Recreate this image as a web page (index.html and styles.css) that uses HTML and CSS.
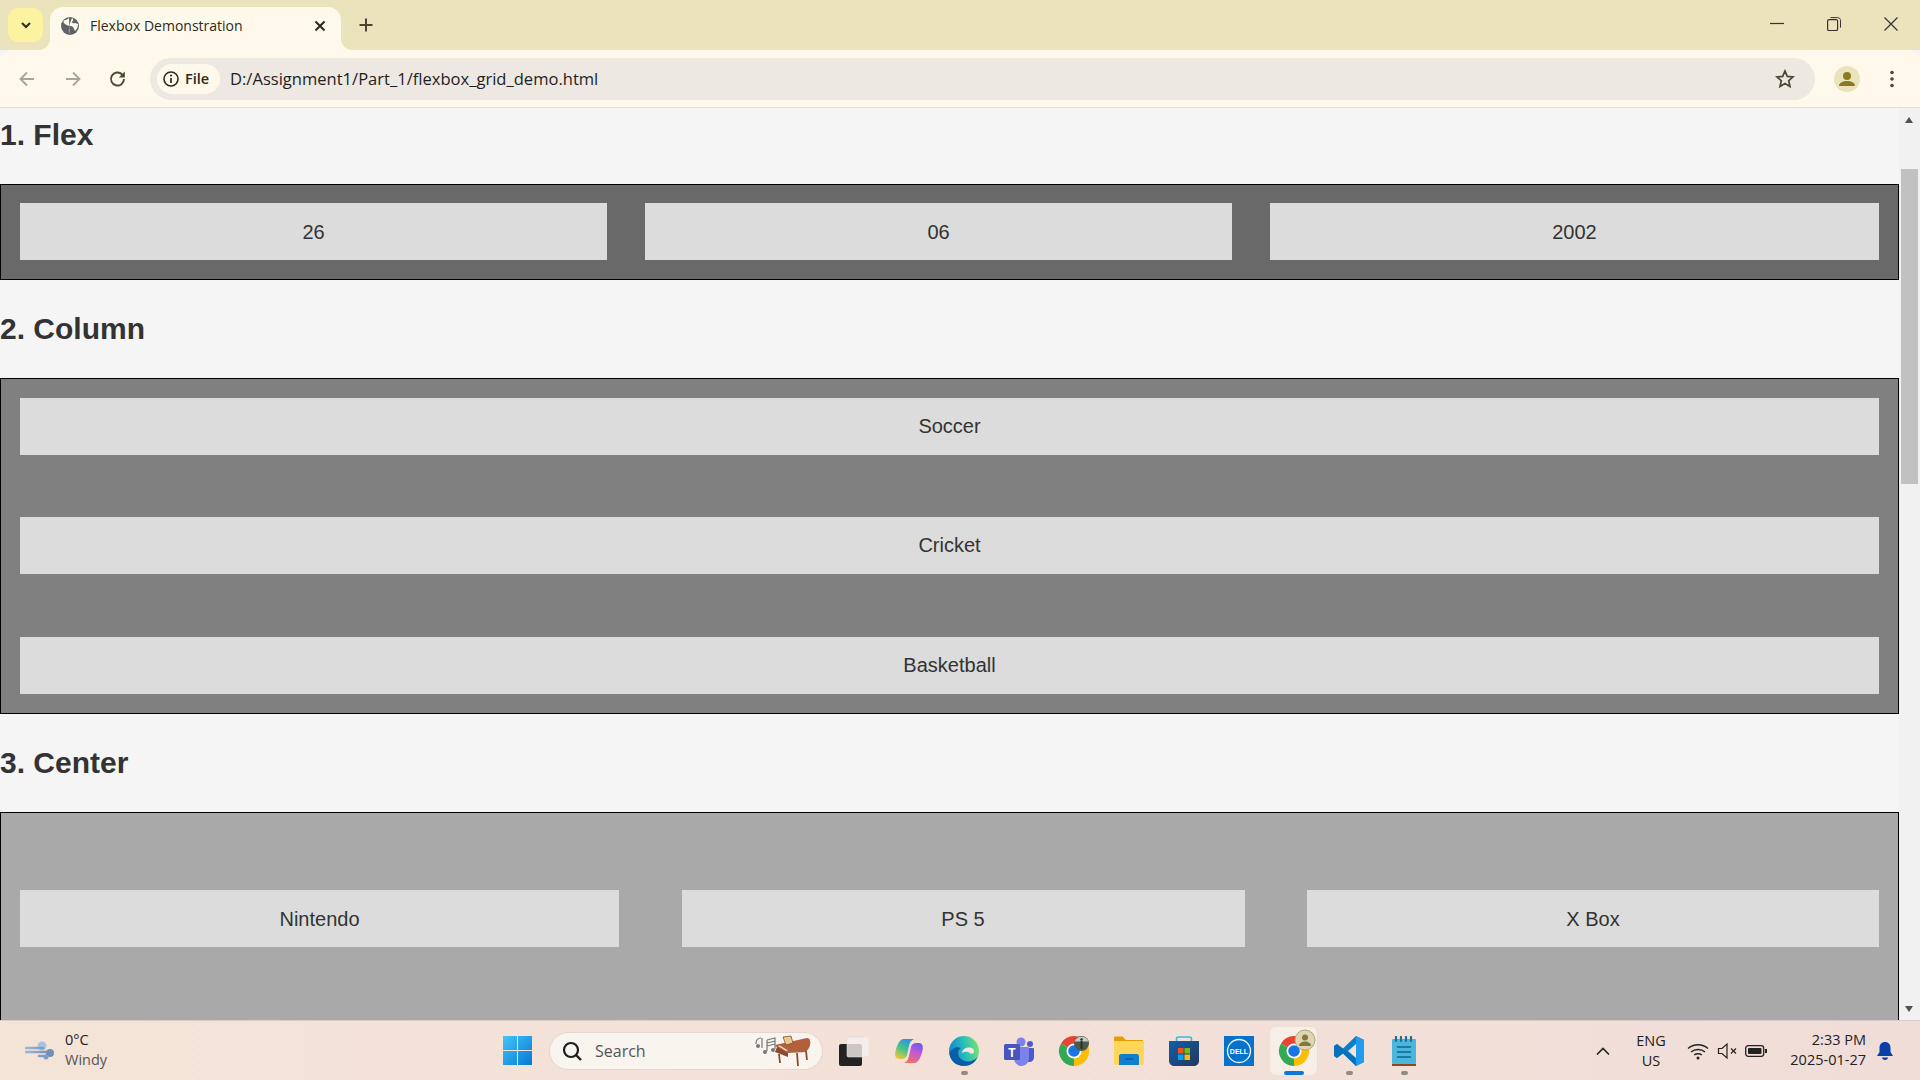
FILE: index.html
```html
<!DOCTYPE html>
<html lang="en">
<head>
    <meta charset="UTF-8">
    <title>Flexbox Demonstration</title>
    <link rel="stylesheet" href="styles.css">
</head>
<body>

<div class="tab-strip">
    <div class="tab-list">
        <svg width="14" height="14" viewBox="0 0 14 14"><path d="M3 5l4 4 4-4" fill="none" stroke="#2b2a1c" stroke-width="2"/></svg>
    </div>
    <div class="tab">
        <svg class="tab-globe" width="20" height="20" viewBox="0 0 20 20">
            <circle cx="10" cy="10" r="9" fill="#5f6368"/>
            <path d="M9 1.500C8 4 5 3.500 3.500 5 3 7 6 9 8 9.500c2 .5 2 2 1 3.500-.5 1.500 0 3 .5 5M12 2c2 1 1 3 0 4s2 1.500 3 1l3 1c0 3-1 5-3 7-1-1-1-3-2-4s-2-1-3-1c-1-1 0-2 0-3" fill="#fff9eb"/>
        </svg>
        <span class="tab-title">Flexbox Demonstration</span>
        <svg class="tab-close" width="14" height="14" viewBox="0 0 14 14"><path d="M2.500 2.500l9 9M11.500 2.500l-9 9" stroke="#2b2a1c" stroke-width="2"/></svg>
    </div>
    <svg class="new-tab" width="16" height="16" viewBox="0 0 16 16"><path d="M8 1.500v13M1.500 8h13" stroke="#4a4630" stroke-width="2"/></svg>
    <div class="window-controls">
        <svg width="14" height="14" viewBox="0 0 14 14"><path d="M0 6.500h14" stroke="#333" stroke-width="1.200"/></svg>
        <svg width="14" height="14" viewBox="0 0 14 14"><rect x=".6" y="2.600" width="10" height="11" rx="1.500" fill="none" stroke="#333" stroke-width="1.200"/><path d="M3.500.6h7c1.800 0 3 1 3 3v7" fill="none" stroke="#333" stroke-width="1"/></svg>
        <svg width="14" height="14" viewBox="0 0 14 14"><path d="M.5.500l13 13M13.500.5l-13 13" stroke="#333" stroke-width="1.200"/></svg>
    </div>
</div>

<div class="toolbar">
    <div class="nav-buttons">
        <svg width="20" height="20" viewBox="0 0 20 20"><path d="M17 10H4M10 3.500L3.500 10l6.500 6.500" fill="none" stroke="#a8a498" stroke-width="1.800"/></svg>
        <svg width="20" height="20" viewBox="0 0 20 20"><path d="M3 10h13M10 3.500l6.500 6.500-6.500 6.500" fill="none" stroke="#a8a498" stroke-width="1.800"/></svg>
        <svg width="20" height="20" viewBox="0 0 20 20"><path d="M16 10a6.500 6.500 0 1 1-2-4.700L16 7" fill="none" stroke="#4d4935" stroke-width="1.900"/><path d="M16.800 2.500v6h-6z" fill="#4d4935"/></svg>
    </div>
    <div class="address-bar">
        <div class="site-chip">
            <svg width="18" height="18" viewBox="0 0 18 18"><circle cx="9" cy="9" r="7" fill="none" stroke="#2b2a1c" stroke-width="1.600"/><path d="M9 8v5" stroke="#2b2a1c" stroke-width="1.700"/><circle cx="9" cy="5.500" r="1.100" fill="#2b2a1c"/></svg>
            <span>File</span>
        </div>
        <span class="url">D:/Assignment1/Part_1/flexbox_grid_demo.html</span>
        <svg class="star" width="20" height="20" viewBox="0 0 20 20"><path d="M10 2l2.300 5.400 5.700.5-4.300 3.800 1.300 5.700-5-3-5 3 1.300-5.700L2 7.900l5.700-.5z" fill="none" stroke="#4a4630" stroke-width="1.700"/></svg>
    </div>
    <svg class="profile" width="26" height="26" viewBox="0 0 26 26"><circle cx="13" cy="13" r="13" fill="#ebe3bc"/><circle cx="13" cy="10" r="4" fill="#8a7a24"/><path d="M5 20c0-3.500 4-5 8-5s8 1.500 8 5z" fill="#8a7a24"/></svg>
    <svg class="menu" width="20" height="20" viewBox="0 0 20 20"><circle cx="10" cy="3.500" r="1.800" fill="#4a4630"/><circle cx="10" cy="10" r="1.800" fill="#4a4630"/><circle cx="10" cy="16.500" r="1.800" fill="#4a4630"/></svg>
</div>

<div class="viewport">
    <div class="page">
        <h2>1. Flex</h2>
        <div class="flex-box">
            <div class="item">26</div>
            <div class="item">06</div>
            <div class="item">2002</div>
        </div>

        <h2>2. Column</h2>
        <div class="column-box">
            <div class="item">Soccer</div>
            <div class="item">Cricket</div>
            <div class="item">Basketball</div>
        </div>

        <h2>3. Center</h2>
        <div class="center-box">
            <div class="item">Nintendo</div>
            <div class="item">PS 5</div>
            <div class="item">X Box</div>
        </div>
    </div>
    <div class="scrollbar">
        <div class="arrow-up"></div>
        <div class="thumb"></div>
        <div class="arrow-down"></div>
    </div>
</div>

<div class="taskbar">
    <div class="weather">
        <svg width="30" height="22" viewBox="0 0 30 22">
            <defs><linearGradient id="wind" x1="0" y1="0" x2="1" y2="0"><stop offset="0" stop-color="#9db8d8"/><stop offset="1" stop-color="#6f8fb8"/></linearGradient></defs>
            <circle cx="17" cy="6" r="4.500" fill="#a9c2de"/>
            <circle cx="25" cy="13" r="4" fill="#6f8fb8"/>
            <path d="M1 8h17M1 12h23M14 16h8" stroke="url(#wind)" stroke-width="2.600" stroke-linecap="round"/>
            <circle cx="21" cy="17" r="2.500" fill="#7f9dc4"/>
        </svg>
        <div class="weather-text">
            <span>0°C</span>
            <span class="weather-sub">Windy</span>
        </div>
    </div>

    <svg class="start" width="29" height="29" viewBox="0 0 29 29">
        <defs><linearGradient id="win" x1="0" y1="0" x2="1" y2="1"><stop offset="0" stop-color="#45c5f8"/><stop offset="1" stop-color="#0378d6"/></linearGradient></defs>
        <path d="M0 0h14v14H0zM15 0h14v14H15zM0 15h14v14H0zM15 15h14v14H15z" fill="url(#win)"/>
    </svg>

    <div class="search">
        <svg width="22" height="22" viewBox="0 0 22 22"><circle cx="10" cy="10" r="7" fill="none" stroke="#1d1d1d" stroke-width="2.200"/><path d="M15 15l5 5" stroke="#1d1d1d" stroke-width="2.400"/></svg>
        <span>Search</span>
        <svg class="piano" width="62" height="32" viewBox="0 0 62 32">
            <path d="M3 9c0-4 2-6 5-6M9 3v10M14 5l8-2v11M14 5v11M14 8l8-2M14 11l8-2" fill="none" stroke="#777" stroke-width="1.200"/>
            <circle cx="5" cy="11" r="2" fill="#777"/><circle cx="12" cy="17" r="2" fill="#777"/><circle cx="20" cy="15" r="2" fill="#777"/>
            <path d="M22 10l32-7c4 0 4 6 2 10l-3 4-18 1-8-2z" fill="#b0603a"/>
            <path d="M24 12l11 6v4l-13-5z" fill="#8c4a2c"/>
            <path d="M25 11l8 5 2-.5-8-5z" fill="#e8e0d0"/>
            <path d="M30 2l8-1 2 7-7 2z" fill="#e6c98c" stroke="#8c4a2c" stroke-width=".8"/>
            <path d="M26 19l1 9M44 18l1 13M53 16l1 9" stroke="#8c4a2c" stroke-width="1.800"/>
        </svg>
    </div>

    <div class="apps">
        <div class="app">
            <svg width="30" height="30" viewBox="0 0 30 30">
                <rect x="0" y="8" width="23" height="22" rx="2" fill="#232323"/>
                <rect x="8" y="1" width="22" height="20" rx="1.500" fill="#f4f0ee" fill-opacity=".8" stroke="#e4dfdc" stroke-width=".6"/>
            </svg>
        </div>
        <div class="app">
            <svg width="30" height="30" viewBox="0 0 30 30">
                <defs>
                    <linearGradient id="cop1" x1="0.700" y1="0" x2="0.200" y2="1"><stop offset="0" stop-color="#2f8fe8"/><stop offset=".5" stop-color="#45c48c"/><stop offset="1" stop-color="#f2c832"/></linearGradient>
                    <linearGradient id="cop2" x1="0.700" y1="0" x2="0.300" y2="1"><stop offset="0" stop-color="#6a5ce8"/><stop offset=".45" stop-color="#c45ad8"/><stop offset="1" stop-color="#f4705c"/></linearGradient>
                </defs>
                <path d="M10 3H20C17.500 4 16 6 15.300 9L13 19C12.500 21 11 23 7 23H5C2 23 .7 20 1.200 17 2.300 11 5 3 10 3z" fill="url(#cop1)"/>
                <path d="M20 27H10C12.500 26 14 24 14.700 21L17 11C17.500 9 19 7 23 7H25C28 7 29.300 10 28.800 13 27.700 19 25 27 20 27z" fill="url(#cop2)"/>
            </svg>
        </div>
        <div class="app has-dot">
            <svg width="30" height="30" viewBox="0 0 30 30">
                <defs>
                    <linearGradient id="edge1" x1="0" y1="0.500" x2="1" y2="0.300"><stop offset="0" stop-color="#0c86d0"/><stop offset=".55" stop-color="#2cc0b8"/><stop offset="1" stop-color="#7fe36e"/></linearGradient>
                </defs>
                <circle cx="15" cy="15" r="15" fill="url(#edge1)"/>
                <path d="M.5 18C2 12 8 10 12 12 8 14 8 20 12 23 17 27 24 26 28.500 21 26 27 21 30 15 30 7 30 1.500 25 .5 18z" fill="#0a5ea8"/>
                <path d="M13 17C13.500 13 17 11.500 20 11.500 23.500 11.500 25.500 13.500 25 16 24.500 17.500 23 18 21.500 17.500 20 15.500 16 15 13 17z" fill="#f3e4dc"/>
            </svg>
        </div>
        <div class="app">
            <svg width="30" height="30" viewBox="0 0 30 30">
                <circle cx="17" cy="6" r="4.500" fill="#7b83eb"/>
                <circle cx="26" cy="8" r="3" fill="#5059c9"/>
                <path d="M22 12h7a1 1 0 0 1 1 1v8c0 3-2 5-5 5h-3z" fill="#5059c9"/>
                <path d="M10 11h14a1 1 0 0 1 1 1v10c0 5-4 8-7.500 8S10 27 10 22z" fill="#7b83eb"/>
                <rect x="0" y="8" width="16" height="16" rx="1.500" fill="#4b53bc"/>
                <text class="teams-t" x="8" y="21">T</text>
            </svg>
        </div>
        <div class="app">
            <svg class="icon-free" width="30" height="30" viewBox="0 0 30 30">
                <path d="M15 15L2 7.500A15 15 0 0 1 28 7.500z" fill="#ea4335"/>
                <path d="M15 15L28 7.500A15 15 0 0 1 15 30z" fill="#fbbc04"/>
                <path d="M15 15L15 30A15 15 0 0 1 2 7.500z" fill="#34a853"/>
                <circle cx="15" cy="15" r="7.500" fill="#fff"/>
                <circle cx="15" cy="15" r="5.800" fill="#1a73e8"/>
                <circle cx="22.500" cy="7.500" r="7.500" fill="#4e5a48"/>
                <path d="M15.500 5.500h14a7.500 7.500 0 0 0-14 0z" fill="#c8ccc8"/>
                <circle cx="22.500" cy="3.500" r="1.300" fill="#26302a"/>
                <path d="M21.500 5h2v8h-2z" fill="#26302a"/>
            </svg>
        </div>
        <div class="app">
            <svg width="30" height="30" viewBox="0 0 30 30">
                <path d="M0 2c0-1 .5-1.500 1.500-1.500h7L12 4h17v6H0z" fill="#e0a000"/>
                <path d="M0 5h30v22c0 1-1 2-2 2H2c-1 0-2-1-2-2z" fill="#fdd65a"/>
                <path d="M5 20c0-1 1-2 2-2h16c1 0 2 1 2 2v9H5z" fill="#0f80cf"/>
                <path d="M11 23h8" stroke="#055c9e" stroke-width="1.400"/>
            </svg>
        </div>
        <div class="app">
            <svg width="30" height="30" viewBox="0 0 30 30">
                <defs><linearGradient id="store" x1="0" y1="0" x2="1" y2="1"><stop offset="0" stop-color="#0f5fa8"/><stop offset="1" stop-color="#24375f"/></linearGradient></defs>
                <path d="M7.500 6V3c0-1 .7-2 2-2h11c1.300 0 2 1 2 2v3" fill="none" stroke="#2fbdf0" stroke-width="1.600"/>
                <path d="M0 5h30v20c0 2.500-2 5-5 5H5c-3 0-5-2.500-5-5z" fill="url(#store)"/>
                <path d="M9 12h5.500v5.500H9z" fill="#f25022"/><path d="M15.500 12H21v5.500h-5.500z" fill="#7fba00"/>
                <path d="M9 18.500h5.500V24H9z" fill="#00a4ef"/><path d="M15.500 18.500H21V24h-5.500z" fill="#ffb900"/>
            </svg>
        </div>
        <div class="app">
            <svg width="30" height="30" viewBox="0 0 30 30">
                <rect width="30" height="30" fill="#0672cb"/>
                <circle cx="15" cy="15" r="11.500" fill="none" stroke="#fff" stroke-width="1.300"/>
                <text class="dell-text" x="15" y="17.500">DELL</text>
            </svg>
        </div>
        <div class="app active">
            <svg class="icon-free" width="30" height="30" viewBox="0 0 30 30">
                <path d="M15 15L2 7.500A15 15 0 0 1 28 7.500z" fill="#ea4335"/>
                <path d="M15 15L28 7.500A15 15 0 0 1 15 30z" fill="#fbbc04"/>
                <path d="M15 15L15 30A15 15 0 0 1 2 7.500z" fill="#34a853"/>
                <circle cx="15" cy="15" r="7.500" fill="#fff"/>
                <circle cx="15" cy="15" r="5.800" fill="#1a73e8"/>
                <circle cx="26" cy="4" r="10" fill="#ddd6b0" stroke="#b0a880" stroke-width="1"/>
                <circle cx="26" cy="1.500" r="3" fill="#85793f"/>
                <path d="M20 10c0-3 3-4.500 6-4.500s6 1.500 6 4.500z" fill="#85793f"/>
            </svg>
        </div>
        <div class="app has-dot">
            <svg width="30" height="30" viewBox="0 0 30 30">
                <path d="M22 0l8 4v22l-8 4L9 17.500 3 22l-3-2v-10l3-2 6 4.500z" fill="#0e7fcb"/>
                <path d="M22 0l8 4v22l-8 4z" fill="#1f9cf0"/>
                <path d="M22 8l-8 7 8 7z" fill="#f0e4dc"/>
                <path d="M3 8l19 15v7L9 17.500 3 22l-3-2v-10z" fill="#0065a9" fill-opacity=".55"/>
            </svg>
        </div>
        <div class="app has-dot">
            <svg width="30" height="30" viewBox="0 0 30 30">
                <rect x="3" y="3" width="24" height="25" rx="1" fill="#4bb6dc"/>
                <path d="M3 28h24v2H3z" fill="#8c4a1c"/>
                <path d="M8 11h14M8 16h14M8 21h14" stroke="#0b6a94" stroke-width="1.700"/>
                <path d="M7 1v4M12 1v4M17 1v4M22 1v4" stroke="#1b6f94" stroke-width="2.200" stroke-linecap="round"/>
            </svg>
        </div>
    </div>

    <div class="tray">
        <svg class="tray-up" width="26" height="14" viewBox="0 0 26 14"><path d="M7 10.500l6-6 6 6" fill="none" stroke="#222" stroke-width="1.600"/></svg>
        <div class="lang"><span>ENG</span><span>US</span></div>
        <svg class="wifi" width="24" height="18" viewBox="0 0 24 18"><path d="M2 6.500c5.500-5 14.500-5 20 0M5 10c3.800-3.300 10.200-3.300 14 0M8.200 13c2-1.600 5.600-1.600 7.600 0" fill="none" stroke="#222" stroke-width="1.400"/><circle cx="12" cy="16" r="1.500" fill="#222"/></svg>
        <svg class="sound" width="22" height="18" viewBox="0 0 22 18"><path d="M1.500 6.500v5h3.500l5 4.500V2L5 6.500z" fill="none" stroke="#222" stroke-width="1.200"/><path d="M14 6.500l5 5M19 6.500l-5 5" stroke="#222" stroke-width="1.200"/></svg>
        <svg class="battery" width="22" height="14" viewBox="0 0 22 14"><rect x=".7" y="1.700" width="18" height="10.600" rx="2.500" fill="none" stroke="#222" stroke-width="1.300"/><rect x="3" y="4" width="13.500" height="6" rx="1" fill="#222"/><rect x="20" y="5" width="2" height="4" fill="#222"/></svg>
        <div class="clock"><span>2:33 PM</span><span>2025-01-27</span></div>
        <svg class="bell" width="18" height="20" viewBox="0 0 18 20"><path d="M9 1c3.500 0 5.500 2.500 5.500 6v4l2.500 4H1l2.500-4V7C3.500 3.500 5.500 1 9 1z" fill="#0a3fa8"/><path d="M6 16.500h6c0 1.500-1.300 2.500-3 2.500s-3-1-3-2.500z" fill="#0a3fa8"/></svg>
    </div>
</div>

</body>
</html>
```

FILE: styles.css
```css
html, body {
    margin: 0;
    height: 100%;
    overflow: hidden;
}
body {
    display: flex;
    flex-direction: column;
    font-family: "Open Sans", "Noto Sans", sans-serif;
    background-color: #f5f5f5;
}
svg {
    display: block;
    flex: none;
}

/* browser chrome */
.tab-strip {
    height: 50px;
    display: flex;
    align-items: flex-start;
    padding-left: 8px;
    background-color: #ebe3bc;
    flex: none;
}
.tab-list {
    width: 35px;
    height: 34px;
    margin-top: 8px;
    display: flex;
    align-items: center;
    justify-content: center;
    background-color: #fbf3a0;
    border-radius: 10px;
}
.tab {
    position: relative;
    width: 291px;
    height: 43px;
    box-sizing: border-box;
    padding-bottom: 6px;
    margin-top: 7px;
    margin-left: 7px;
    display: flex;
    align-items: center;
    background-color: #fff9eb;
    border-radius: 13px 13px 0 0;
}
.tab::before, .tab::after {
    content: "";
    position: absolute;
    bottom: 0;
    width: 12px;
    height: 12px;
}
.tab::before {
    left: -12px;
    background: radial-gradient(circle at 0 0, transparent 12px, #fff9eb 12.500px);
}
.tab::after {
    right: -12px;
    background: radial-gradient(circle at 100% 0, transparent 12px, #fff9eb 12.500px);
}
.tab-globe {
    margin-left: 10px;
}
.tab-title {
    margin-left: 10px;
    font-size: 14px;
    color: #2b2a1c;
    white-space: nowrap;
}
.tab-close {
    margin-left: auto;
    margin-right: 14px;
}
.new-tab {
    margin-top: 17px;
    margin-left: 17px;
}
.window-controls {
    margin-left: auto;
    padding-right: 22px;
    margin-top: 17px;
    display: flex;
    gap: 43px;
}

.toolbar {
    height: 57px;
    display: flex;
    align-items: center;
    padding-left: 17px;
    background-color: #fff9eb;
    border-radius: 12px 12px 0 0;
    border-bottom: 1px solid #e6dfcd;
    flex: none;
}
.nav-buttons {
    display: flex;
    gap: 25.500px;
}
.address-bar {
    flex: 1;
    height: 42px;
    margin-left: 22px;
    padding-left: 7px;
    padding-right: 20px;
    display: flex;
    align-items: center;
    background-color: #ede8e1;
    border-radius: 21px;
}
.site-chip {
    width: 63px;
    height: 30px;
    box-sizing: border-box;
    padding-left: 5px;
    display: flex;
    align-items: center;
    gap: 5px;
    background-color: #fff9eb;
    border-radius: 15px;
    font-size: 14.500px;
    font-weight: 600;
    color: #2b2a1c;
}
.url {
    margin-left: 10px;
    font-size: 16.560px;
    color: #1f1f1f;
    white-space: nowrap;
}
.star {
    margin-left: auto;
}
.profile {
    margin-left: 19px;
}
.menu {
    margin-left: 22px;
    margin-right: 18px;
}

/* page */
.viewport {
    flex: 1;
    min-height: 0;
    display: flex;
}
.page {
    flex: 1;
    min-width: 0;
    overflow: hidden;
    font-family: "Liberation Sans", Arial, sans-serif;
    color: #333;
}
h2 {
    height: 34px;
    margin: 31px 0 33px;
    font-size: 30px;
    line-height: 36px;
    font-weight: bold;
}
h2:first-child {
    margin-top: 9px;
}
.item {
    display: flex;
    align-items: center;
    justify-content: center;
    height: 57px;
    background-color: #dcdcdc;
    font-size: 20px;
}
.flex-box {
    display: grid;
    grid-template-columns: 587px 587px 1fr;
    column-gap: 38px;
    padding: 18px 19px 19px 19px;
    background-color: dimgray;
    border: 1px solid black;
}
.flex-box .item, .center-box .item {
    box-sizing: border-box;
    padding-top: 2px;
}
.column-box {
    display: flex;
    flex-direction: column;
    gap: 62px;
    padding: 19px;
    background-color: gray;
    border: 1px solid black;
}
.column-box .item:last-child {
    margin-top: 1px;
}
.center-box {
    display: grid;
    grid-template-columns: 599px 563px 1fr;
    column-gap: 62.500px;
    padding: 77px 19px;
    background-color: darkgray;
    border: 1px solid black;
}

.scrollbar {
    width: 21px;
    display: flex;
    flex-direction: column;
    background-color: #f1f1f1;
    flex: none;
}
.arrow-up, .arrow-down {
    width: 0;
    height: 0;
    margin-left: 6px;
    border-left: 4.500px solid transparent;
    border-right: 4.500px solid transparent;
}
.arrow-up {
    margin-top: 9px;
    border-bottom: 6px solid #505050;
}
.arrow-down {
    margin-top: auto;
    margin-bottom: 8px;
    border-top: 6px solid #505050;
}
.thumb {
    height: 315px;
    margin: 46px 2px 0;
    background-color: #c1c1c1;
}

/* windows taskbar */
.taskbar {
    height: 60px;
    box-sizing: border-box;
    display: flex;
    align-items: center;
    border-top: 1px solid #d9cdc6;
    background: linear-gradient(90deg, #f4e3d7, #f3e1d8 50%, #f0ddd8);
    color: #222;
    font-family: "Open Sans", "Noto Sans", sans-serif;
    flex: none;
}
.weather {
    width: 478px;
    padding-left: 25px;
    display: flex;
    align-items: center;
    gap: 10px;
}
.weather-text, .lang, .clock {
    display: flex;
    flex-direction: column;
    font-size: 14.500px;
    line-height: 19.500px;
}
.weather-text, .clock {
    margin-top: -2px;
}
.weather-sub {
    color: #555;
}
.search {
    width: 274px;
    height: 38px;
    box-sizing: border-box;
    margin-left: 17px;
    padding-left: 11px;
    display: flex;
    align-items: center;
    gap: 12px;
    background-color: #faf4ef;
    border: 1px solid #e4d6ce;
    border-radius: 19px;
    font-size: 16px;
    color: #555;
}
.piano {
    margin-left: auto;
    margin-right: 7px;
}
.apps {
    display: flex;
    margin-left: 3.500px;
}
.app {
    position: relative;
    width: 55px;
    height: 48px;
    display: flex;
    align-items: center;
    justify-content: center;
}
.icon-free {
    overflow: visible;
}
.app.active::before {
    content: "";
    position: absolute;
    top: 0;
    bottom: 0;
    left: 3.500px;
    right: 4.500px;
    background-color: #f7eee8;
    border-radius: 6px;
    box-shadow: 1px 0 0 #e8dcd4;
}
.app.active svg {
    position: relative;
}
.has-dot::after, .app.active::after {
    content: "";
    position: absolute;
    bottom: 0;
    left: 50%;
    width: 7px;
    height: 4px;
    margin-left: -3.500px;
    border-radius: 2px;
    background-color: #8f8a86;
}
.app.active::after {
    width: 20px;
    margin-left: -10px;
    background-color: #0a78d4;
}
.teams-t {
    font-family: "Liberation Sans", sans-serif;
    font-size: 12px;
    font-weight: bold;
    text-anchor: middle;
    fill: #fff;
}
.dell-text {
    font-family: "Liberation Sans", sans-serif;
    font-size: 7px;
    font-weight: bold;
    text-anchor: middle;
    fill: #fff;
}
.tray {
    margin-left: auto;
    padding-right: 26px;
    display: flex;
    align-items: center;
}
.lang {
    width: 46px;
    margin-left: 12px;
    align-items: center;
}
.wifi {
    margin-left: 12px;
}
.sound {
    margin-left: 7px;
}
.battery {
    margin-left: 6px;
}
.clock {
    width: 99px;
    align-items: flex-end;
}
.bell {
    margin-left: 10px;
}
```
